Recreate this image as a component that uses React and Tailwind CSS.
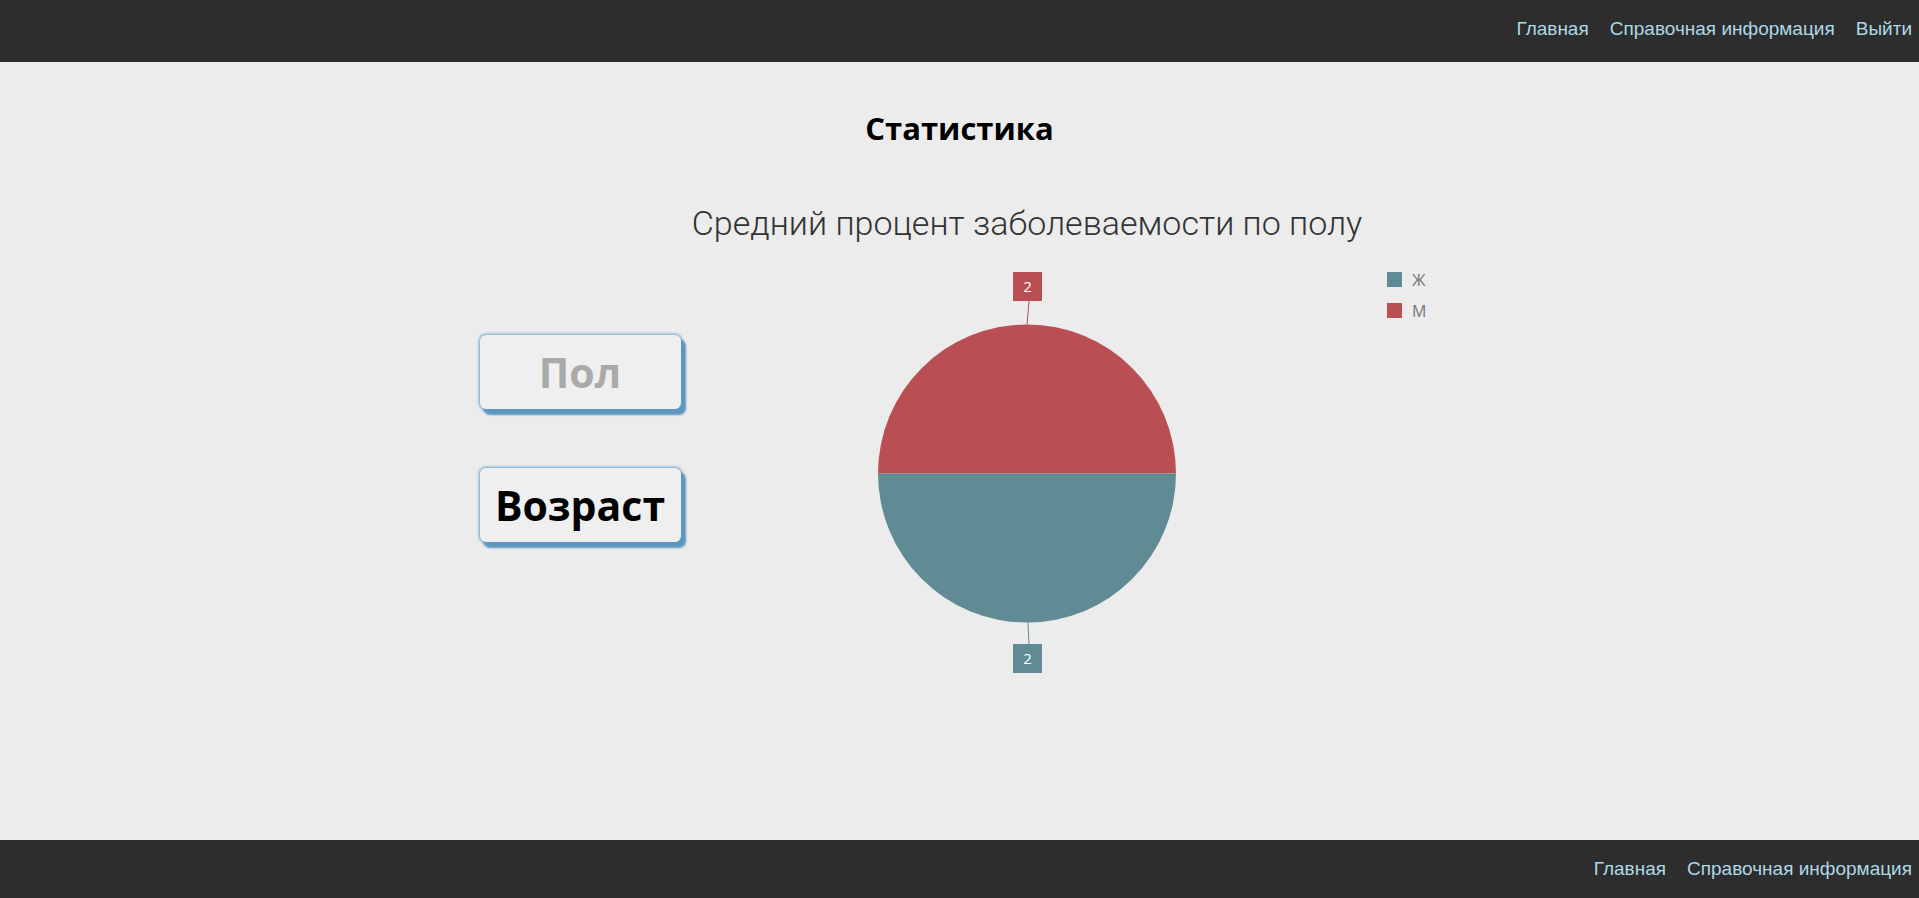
import React from 'react';

const navLinks = ['Главная', 'Справочная информация', 'Выйти'];
const footerLinks = ['Главная', 'Справочная информация'];

const RED = '#b94f52';
const TEAL = '#608b94';

// пирог: 2 сектора по 50%
const PieChart = () => {
    const cx = 346;
    const cy = 230.5;
    const r = 149;
    return (
        <svg width="759" height="460" className="block">
            <path d={`M ${cx - r} ${cy} A ${r} ${r} 0 0 1 ${cx + r} ${cy} Z`} fill={RED} />
            <path d={`M ${cx + r} ${cy} A ${r} ${r} 0 0 1 ${cx - r} ${cy} Z`} fill={TEAL} />

            <line x1="348" y1="58" x2="346" y2={cy - r} stroke={RED} strokeWidth="1" />
            <rect x="332" y="29" width="29" height="29" fill={RED} />
            <text x="346.5" y="49" textAnchor="middle" fill="#fff" fontSize="15" fontFamily="'Open Sans', sans-serif">2</text>

            <line x1="347" y1={cy + r} x2="348" y2="401" stroke={TEAL} strokeWidth="1" />
            <rect x="332" y="401" width="29" height="29" fill={TEAL} />
            <text x="346.5" y="421" textAnchor="middle" fill="#fff" fontSize="15" fontFamily="'Open Sans', sans-serif">2</text>

            <rect x="706" y="29" width="15" height="15" fill={TEAL} />
            <text x="731" y="43" fill="#777" fontSize="16" fontFamily="'Open Sans', sans-serif">Ж</text>
            <rect x="706" y="60" width="15" height="15" fill={RED} />
            <text x="731" y="74" fill="#777" fontSize="16" fontFamily="'Open Sans', sans-serif">М</text>
        </svg>
    );
};

const StatButton = ({ label, active }) => (
    <button
        className={`w-[201px] h-[74px] rounded-[6px] bg-[#efefef] shadow-[4px_5px_2px_1px_#5b97be,0_0_3px_1px_#6aa2c6] font-['Open_Sans',sans-serif] font-bold text-[41px] leading-none ${
            active ? 'text-[#aaaaaa]' : 'text-black'
        }`}
    >
        {label}
    </button>
);

export default function App() {
    return (
        <div className="min-h-screen flex flex-col bg-[#ececec]">
            <header className="h-[62px] bg-[#2d2d2d] flex items-center justify-end gap-[21px] pr-[7px] pb-[4px] font-['Liberation_Sans',Arial,sans-serif] text-[19px]">
                {navLinks.map((l) => (
                    <a key={l} href="#" className="text-[#add8e6]">{l}</a>
                ))}
            </header>

            <main className="flex-1 flex flex-col items-center">
                <h1 className="mt-[46px] text-[31px] leading-[40px] font-bold text-black font-['Open_Sans',sans-serif]">
                    Статистика
                </h1>

                <div className="w-[960px] mt-[55px] flex items-start">
                    <div className="w-[201px] pt-[132px] flex flex-col gap-[59px]">
                        <StatButton label="Пол" active />
                        <StatButton label="Возраст" />
                    </div>

                    <div className="flex-1 flex flex-col">
                        <div className="w-[693px] text-center whitespace-nowrap text-[34px] leading-[40px] font-light text-[#333] font-['Roboto',sans-serif]">
                            Средний процент заболеваемости по полу
                        </div>
                        <PieChart />
                    </div>
                </div>
            </main>

            <footer className="h-[58px] bg-[#2d2d2d] flex justify-end gap-[21px] pr-[7px] pt-[18px] font-['Liberation_Sans',Arial,sans-serif] text-[19px] leading-[22px]">
                {footerLinks.map((l) => (
                    <a key={l} href="#" className="text-[#add8e6]">{l}</a>
                ))}
            </footer>
        </div>
    );
}
